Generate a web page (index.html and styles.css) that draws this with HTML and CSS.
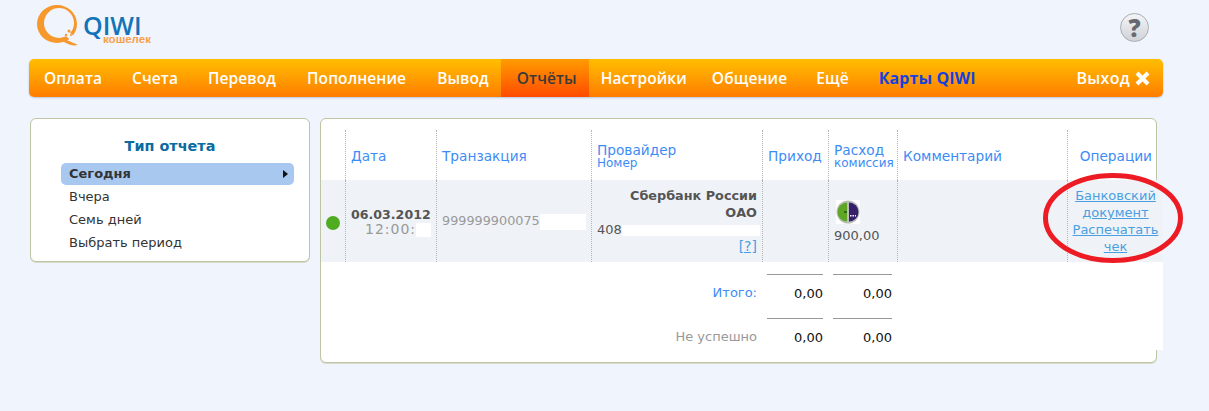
FILE: index.html
```
<!DOCTYPE html>
<html>

<head>
    <title>QIWI Кошелек - Отчёты</title>
    <link rel="stylesheet" href="styles.css">
</head>

<body>
    <div class="page">
        <div class="top">
            <a href="#" class="logo">
                <svg class="logo-q" width="46" height="42" viewBox="0 0 46 42">
                    <path fill="#f7982d" fill-rule="evenodd" d="M1 20a20 19 0 1 0 40 0a20 19 0 1 0-40 0zM8 19a15 15 0 1 1 30 0a15 15 0 1 1-30 0z" />
                    <path d="M29 28l12 10" stroke="#f0f4fd" stroke-width="5" />
                    <path fill="#f7982d" d="M19 35c6-1 10 0 14 2 3 1 6 3 9 4-5 1-8 0-12-2-3-2-7-2-11-2z" />
                    <circle cx="33" cy="27" r="1.500" fill="#f7982d" />
                    <circle cx="30" cy="31" r="1.200" fill="#f7982d" />
                    <circle cx="35" cy="31" r="1" fill="#f7982d" />
                </svg>
                <span class="logo-text">QIWI</span>
                <span class="logo-sub">кошелек</span>
            </a>
            <a href="#" class="help">?</a>
        </div>

        <div class="nav-menu">
            <a href="#">Оплата</a>
            <a href="#">Счета</a>
            <a href="#">Перевод</a>
            <a href="#">Пополнение</a>
            <a href="#">Вывод</a>
            <a href="#" class="active">Отчёты</a>
            <a href="#">Настройки</a>
            <a href="#">Общение</a>
            <a href="#">Ещё</a>
            <a href="#" class="cards">Карты QIWI</a>
            <a href="#" class="logout">Выход
                <svg width="15" height="15" viewBox="0 0 15 15">
                    <path d="M2 2l11 11M13 2L2 13" stroke="#fff" stroke-width="4" />
                </svg>
            </a>
        </div>

        <div class="content">
            <div class="side-box">
                <h2>Тип отчета</h2>
                <ul class="report-list">
                    <li class="selected">Сегодня</li>
                    <li>Вчера</li>
                    <li>Семь дней</li>
                    <li>Выбрать период</li>
                </ul>
            </div>

            <div class="main-box">
                <table class="report">
                    <colgroup>
                        <col class="c-status">
                        <col class="c-date">
                        <col class="c-tr">
                        <col class="c-prov">
                        <col class="c-in">
                        <col class="c-out">
                        <col class="c-comment">
                        <col class="c-ops">
                    </colgroup>
                    <tr class="head">
                        <th class="no-line"></th>
                        <th>Дата</th>
                        <th>Транзакция</th>
                        <th>Провайдер<small>Номер</small></th>
                        <th>Приход</th>
                        <th>Расход<small>комиссия</small></th>
                        <th>Комментарий</th>
                        <th class="ops-head">Операции</th>
                    </tr>
                    <tr class="row">
                        <td class="no-line"><span class="dot"></span></td>
                        <td class="date"><b>06.03.2012</b><span class="time">12:00:<i class="mask m-time"></i></span></td>
                        <td class="tr">999999900075<i class="mask m-tr"></i></td>
                        <td class="prov">
                            <b>Сбербанк России ОАО</b>
                            <div class="num">408<i class="mask m-num"></i></div>
                            <a href="#">[?]</a>
                        </td>
                        <td></td>
                        <td class="out">
                            <svg class="op-icon" width="24" height="24" viewBox="0 0 24 24">
                                <rect width="24" height="24" fill="#fff" />
                                <circle cx="12" cy="12" r="11.500" fill="#b9bfba" />
                                <path d="M11 2.500A9.500 9.500 0 0 0 11 21.500z" fill="#5fa526" />
                                <path d="M13 2.500A9.500 9.500 0 0 1 13 21.500z" fill="#37206a" />
                                <path d="M8 11h3v2H8z" fill="#2f6b10" />
                                <path d="M14 15h1.500v1.500H14zM16.500 15H18v1.500h-1.500zM19 15h1v1.500h-1z" fill="#fff" />
                            </svg>
                            <div>900,00</div>
                        </td>
                        <td></td>
                        <td class="ops">
                            <a href="#">Банковский документ</a>
                            <a href="#">Распечатать чек</a>
                        </td>
                    </tr>
                    <tr class="total">
                        <td colspan="4" class="total-name blue">Итого:</td>
                        <td><div class="sum">0,00</div></td>
                        <td><div class="sum">0,00</div></td>
                        <td colspan="2"></td>
                    </tr>
                    <tr class="total">
                        <td colspan="4" class="total-name">Не успешно</td>
                        <td><div class="sum">0,00</div></td>
                        <td><div class="sum">0,00</div></td>
                        <td colspan="2"></td>
                    </tr>
                </table>
                <svg class="circle" width="140" height="90" viewBox="0 0 140 90">
                    <ellipse cx="70" cy="45" rx="67.500" ry="42.500" fill="none" stroke="#ed1c24" stroke-width="5" />
                </svg>
            </div>
        </div>
    </div>
</body>

</html>
```

FILE: styles.css
```
body {
    font-family: "DejaVu Sans", Verdana, sans-serif;
    font-size: 13px;
    background-color: #f0f4fd;
    color: #333;
    margin: 0;
    padding: 0;
}

.page {
    width: 1134px;
    margin-left: 29px;
    height: 411px;
}

a {
    color: #4a9fe0;
}

/* Header with logo */
.top {
    height: 59px;
    display: flex;
    justify-content: space-between;
    align-items: flex-start;
}

.logo {
    display: block;
    position: relative;
    width: 130px;
    height: 50px;
    text-decoration: none;
}

.logo-q {
    position: absolute;
    left: 7px;
    top: 4px;
}

.logo-text {
    position: absolute;
    left: 54px;
    top: 16px;
    font-family: "Open Sans", sans-serif;
    font-size: 25px;
    line-height: 18px;
    font-weight: 600;
    color: #1273b8;
}

.logo-sub {
    position: absolute;
    left: 74px;
    top: 34px;
    font-family: "Liberation Sans", sans-serif;
    font-size: 11.5px;
    line-height: 10px;
    font-weight: 700;
    color: #f7a04a;
}

.help {
    width: 27px;
    height: 27px;
    margin: 13px 14px 0 0;
    border: 1px solid #a9adb3;
    border-radius: 50%;
    background: linear-gradient(#f4f5f7, #cfd2d7);
    color: #666a70;
    font-family: "Open Sans", sans-serif;
    font-size: 24px;
    font-weight: 800;
    line-height: 27px;
    text-align: center;
    text-decoration: none;
}

/* Orange menu */
.nav-menu {
    height: 38px;
    display: flex;
    padding-left: 1px;
    border-radius: 5px;
    background: linear-gradient(#ffbe00, #ff7d00);
    box-shadow: 0 1px 2px #bcc6d8;
}

.nav-menu a {
    padding: 0 14px;
    font-family: "Open Sans", sans-serif;
    font-size: 15.5px;
    letter-spacing: 0.1px;
    font-weight: 600;
    line-height: 39px;
    color: #fff;
    text-decoration: none;
}

.nav-menu a:nth-child(2),
.nav-menu a:nth-child(3) {
    margin-left: 2px;
}

.nav-menu a:nth-child(4),
.nav-menu a:nth-child(5) {
    margin-left: 3px;
}

.nav-menu a.active {
    margin-left: -2px;
    padding: 0 12px 0 16px;
    color: #3a3a3a;
    background: linear-gradient(#ff9c00, #ff4b00);
}

.nav-menu a:nth-child(7) {
    margin-left: -2px;
}

.nav-menu a:nth-child(8) {
    margin-left: -3px;
}

.nav-menu a:nth-child(9) {
    margin-left: 1px;
}

.nav-menu a.cards {
    margin-left: 2px;
    font-size: 16px;
    font-weight: 700;
    color: #1540e0;
}

.nav-menu a.logout {
    margin-left: auto;
    padding-right: 13px;
    display: flex;
    align-items: center;
    gap: 5px;
    font-size: 16px;
    letter-spacing: 0.3px;
}

.content {
    display: flex;
    gap: 10px;
    margin: 21px 0 0 1px;
}

/* Left box */
.side-box {
    width: 278px;
    height: 142px;
    background-color: #fff;
    border: 1px solid #bfc4a4;
    border-radius: 6px;
    box-shadow: 0 1px 0 #d8dbcc;
}

.side-box h2 {
    margin: 17px 0 7px;
    font-size: 14.4px;
    line-height: 20px;
    text-align: center;
    color: #0a6aa1;
}

.report-list {
    list-style: none;
    padding: 0;
    margin: 0 15px 0 30px;
}

.report-list li {
    height: 23px;
    line-height: 23px;
    padding-left: 8px;
}

.report-list li.selected {
    position: relative;
    height: 22px;
    line-height: 22px;
    font-weight: 700;
    background-color: #a8c8f0;
    border-radius: 5px;
}

.report-list li.selected::after {
    content: "";
    position: absolute;
    right: 6px;
    top: 7px;
    border-left: 5px solid #111;
    border-top: 4px solid transparent;
    border-bottom: 4px solid transparent;
}

/* Right box with the table */
.main-box {
    position: relative;
    width: 835px;
    height: 232px;
    padding-top: 11px;
    background-color: #fff;
    border: 1px solid #bfc4a4;
    border-radius: 6px;
    box-shadow: 0 1px 0 #d8dbcc;
}

.report {
    width: 842px;
    table-layout: fixed;
    border-collapse: separate;
    border-spacing: 0;
}

.c-status { width: 24px; }
.c-date { width: 91px; }
.c-tr { width: 155px; }
.c-prov { width: 171px; }
.c-in { width: 66px; }
.c-out { width: 69px; }
.c-comment { width: 170px; }
.c-ops { width: 96px; }

.report th,
.row td {
    border-left: 1px dotted #b5b5b5;
}

.report th.no-line,
.row td.no-line {
    border-left: none;
}

.head th {
    height: 50px;
    padding: 2px 0 0 5px;
    box-sizing: border-box;
    font-size: 13.7px;
    line-height: 14px;
    font-weight: 400;
    text-align: left;
    color: #3d8cf5;
    vertical-align: middle;
}

.head th small {
    display: block;
    font-size: 12px;
    line-height: 13px;
}

.head th.ops-head {
    padding: 2px 11px 0 0;
    text-align: right;
}

.row td {
    height: 82px;
    padding: 0;
    box-sizing: border-box;
    background-color: #eff3f8;
    line-height: 17px;
    color: #555;
}

.dot {
    display: block;
    width: 14px;
    height: 14px;
    margin: 3px 0 0 5px;
    border-radius: 50%;
    background-color: #4fab1f;
}

.mask {
    display: inline-block;
    background-color: #fff;
    vertical-align: middle;
}

.m-time { width: 15px; height: 14px; }
.m-tr { width: 46px; height: 16px; }
.m-num { width: 138px; height: 11px; }

.date {
    padding-left: 5px !important;
    line-height: 15px !important;
}

.date b {
    display: block;
    margin-top: 2px;
    font-size: 12.6px;
    white-space: nowrap;
}

.time {
    display: block;
    padding-left: 14px;
    font-size: 14px;
    letter-spacing: 1px;
    color: #999;
}

.tr {
    padding-left: 5px !important;
    white-space: nowrap;
    font-size: 12.8px;
    color: #999 !important;
}

.prov {
    padding: 0 5px !important;
    text-align: right;
}

.prov b {
    font-size: 12.8px;
}

.prov a {
    font-size: 14px;
}

.num {
    text-align: left;
    white-space: nowrap;
}

.out {
    padding-left: 5px !important;
}

.op-icon {
    display: block;
    margin: 2px 0 3px 2px;
}

.ops {
    text-align: center;
}

.ops a {
    display: block;
}

.total td {
    height: 44px;
    padding: 0;
    box-sizing: border-box;
    background-color: #fff;
    vertical-align: top;
}

.total-name {
    padding: 23px 5px 0 0 !important;
    line-height: 16px;
    text-align: right;
    color: #999;
}

.total-name.blue {
    color: #3d8cf5;
}

.sum {
    margin: 12px 5px 0;
    padding-top: 11px;
    border-top: 1px solid #999;
    line-height: 16px;
    text-align: right;
    color: #111;
}

.circle {
    position: absolute;
    left: 722px;
    top: 54px;
}
```
